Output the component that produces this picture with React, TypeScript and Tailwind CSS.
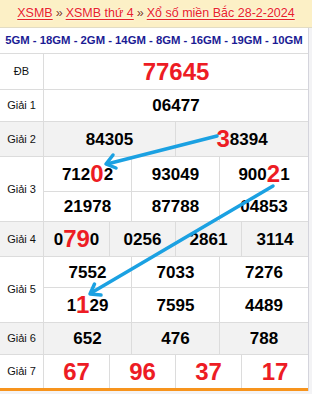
import type { ReactNode } from "react"

const red = "text-[24px] text-[#ed1c24]"

function Hi({ children }: { children: ReactNode }) {
  return <span className={red}>{children}</span>
}

function Label({ children }: { children: ReactNode }) {
  return (
    <div className="flex w-[44px] shrink-0 items-center justify-center border-r border-[#dcdcdc] text-[11px] font-normal text-[#111]">
      {children}
    </div>
  )
}

function Cell({ children }: { children: ReactNode }) {
  return <div className="flex items-center justify-center">{children}</div>
}

export default function App() {
  return (
    <div className="relative h-[394px] w-[312px] overflow-hidden bg-[#f3f3f5] font-['Liberation_Sans',Arial,sans-serif] leading-none">
      <div className="flex h-[28px] items-center justify-center border-b border-[#e2dcc4] bg-[#fcf0c6] text-[12.5px] [text-shadow:0_0_2px_rgba(255,255,255,0.9)]">
        <span className="text-[#e8232b] underline underline-offset-2">XSMB</span>
        <span className="mx-[3px] text-[#7a3a1a]">»</span>
        <span className="text-[#e8232b] underline underline-offset-2">XSMB thứ 4</span>
        <span className="mx-[3px] text-[#7a3a1a]">»</span>
        <span className="text-[#e8232b] underline underline-offset-2">Xổ số miền Bắc 28-2-2024</span>
      </div>

      <div className="w-[309px] border-r border-[#d4d4dc] bg-white">
        <div className="flex h-[26px] items-center justify-center border-b border-[#dcdcdc] text-[11.3px] font-bold text-[#1b1b94]">
          5GM - 18GM - 2GM - 14GM - 8GM - 16GM - 19GM - 10GM
        </div>

        <div className="text-[17px] font-bold text-black">
          {/* ĐB */}
          <div className="flex h-[36px] border-b border-[#dcdcdc]">
            <Label>ĐB</Label>
            <div className="flex flex-1 items-center justify-center text-[24px] text-[#ed1c24]">77645</div>
          </div>

          {/* Giải 1 */}
          <div className="flex h-[32px] border-b border-[#dcdcdc]">
            <Label>Giải 1</Label>
            <div className="flex flex-1 items-center justify-center">06477</div>
          </div>

          {/* Giải 2 */}
          <div className="flex h-[35px] border-b border-[#dcdcdc] bg-[#f2f2f2]">
            <Label>Giải 2</Label>
            <div className="grid flex-1 grid-cols-2 divide-x divide-[#dcdcdc]">
              <Cell>84305</Cell>
              <Cell>
                <Hi>3</Hi>8394
              </Cell>
            </div>
          </div>

          {/* Giải 3 */}
          <div className="flex border-b border-[#dcdcdc]">
            <Label>Giải 3</Label>
            <div className="flex flex-1 flex-col">
              <div className="grid h-[35px] grid-cols-3 divide-x divide-[#dcdcdc] border-b border-[#dcdcdc]">
                <Cell>
                  712<Hi>0</Hi>2
                </Cell>
                <Cell>93049</Cell>
                <Cell>
                  900<Hi>2</Hi>1
                </Cell>
              </div>
              <div className="grid h-[29px] grid-cols-3 divide-x divide-[#dcdcdc]">
                <Cell>21978</Cell>
                <Cell>87788</Cell>
                <Cell>04853</Cell>
              </div>
            </div>
          </div>

          {/* Giải 4 */}
          <div className="flex h-[35px] border-b border-[#dcdcdc] bg-[#f2f2f2]">
            <Label>Giải 4</Label>
            <div className="grid flex-1 grid-cols-4 divide-x divide-[#dcdcdc]">
              <Cell>
                0<Hi>79</Hi>0
              </Cell>
              <Cell>0256</Cell>
              <Cell>2861</Cell>
              <Cell>3114</Cell>
            </div>
          </div>

          {/* Giải 5 */}
          <div className="flex border-b border-[#dcdcdc]">
            <Label>Giải 5</Label>
            <div className="flex flex-1 flex-col">
              <div className="grid h-[31px] grid-cols-3 divide-x divide-[#dcdcdc] border-b border-[#dcdcdc]">
                <Cell>7552</Cell>
                <Cell>7033</Cell>
                <Cell>7276</Cell>
              </div>
              <div className="grid h-[34px] grid-cols-3 divide-x divide-[#dcdcdc]">
                <Cell>
                  1<Hi>1</Hi>29
                </Cell>
                <Cell>7595</Cell>
                <Cell>4489</Cell>
              </div>
            </div>
          </div>

          {/* Giải 6 */}
          <div className="flex h-[32px] border-b border-[#dcdcdc] bg-[#f2f2f2]">
            <Label>Giải 6</Label>
            <div className="grid flex-1 grid-cols-3 divide-x divide-[#dcdcdc]">
              <Cell>652</Cell>
              <Cell>476</Cell>
              <Cell>788</Cell>
            </div>
          </div>

          {/* Giải 7 */}
          <div className="flex h-[36px] border-b-[3px] border-[#f7941d]">
            <Label>Giải 7</Label>
            <div className="grid flex-1 grid-cols-4 divide-x divide-[#dcdcdc] text-[24px] text-[#ed1c24]">
              <Cell>67</Cell>
              <Cell>96</Cell>
              <Cell>37</Cell>
              <Cell>17</Cell>
            </div>
          </div>
        </div>
      </div>

      {/* arrows drawn over the table */}
      <svg
        className="pointer-events-none absolute left-0 top-0"
        width="312"
        height="394"
        viewBox="0 0 312 394"
        fill="none"
        stroke="#1ba1e2"
        strokeWidth="3.5"
        strokeLinecap="round"
        strokeLinejoin="round"
      >
        <path d="M217 136 L107 164" />
        <path d="M116 168 L106 164 L113 155" />
        <path d="M273 186 L91 293" />
        <path d="M101 295 L90 294 L94.5 284" />
      </svg>
    </div>
  )
}
